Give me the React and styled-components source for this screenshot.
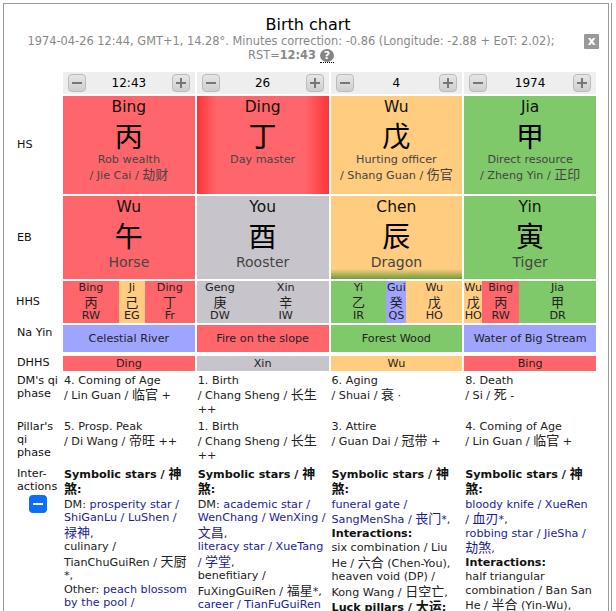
import React from "react";
import styled, { createGlobalStyle } from "styled-components";

const RED = "#ff666b";
const ORANGE = "#ffcc80";
const GREEN = "#80c96b";
const GRAY = "#c8c4cb";
const BLUE = "#9fa5ff";

const pillars = [
  {
    control: "12:43",
    hs: { pinyin: "Bing", hanzi: "丙", role: "Rob wealth", sub: "/ Jie Cai / 劫财", color: RED },
    eb: { pinyin: "Wu", hanzi: "午", animal: "Horse", color: RED },
    hhs: [
      { name: "Bing", hanzi: "丙", code: "RW", color: RED, width: 56 },
      { name: "Ji", hanzi: "己", code: "EG", color: ORANGE, width: 26 },
      { name: "Ding", hanzi: "丁", code: "Fr", color: RED, width: 50 },
    ],
    nayin: { text: "Celestial River", color: BLUE },
    dhhs: { text: "Ding", color: RED },
    dmPhase: ["4. Coming of Age", "/ Lin Guan / 临官 +"],
    pillarPhase: ["5. Prosp. Peak", "/ Di Wang / 帝旺 ++"],
  },
  {
    control: "26",
    hs: { pinyin: "Ding", hanzi: "丁", role: "Day master", color: RED, master: true },
    eb: { pinyin: "You", hanzi: "酉", animal: "Rooster", color: GRAY },
    hhs: [
      { name: "Geng", hanzi: "庚", code: "DW", color: GRAY, width: 46 },
      { name: "Xin", hanzi: "辛", code: "IW", color: GRAY, width: 85 },
    ],
    nayin: { text: "Fire on the slope", color: RED },
    dhhs: { text: "Xin", color: GRAY },
    dmPhase: ["1. Birth", "/ Chang Sheng / 长生 ++"],
    pillarPhase: ["1. Birth", "/ Chang Sheng / 长生 ++"],
  },
  {
    control: "4",
    hs: { pinyin: "Wu", hanzi: "戊", role: "Hurting officer", sub: "/ Shang Guan / 伤官", color: ORANGE },
    eb: { pinyin: "Chen", hanzi: "辰", animal: "Dragon", color: ORANGE, earthy: true },
    hhs: [
      { name: "Yi", hanzi: "乙", code: "IR", color: GREEN, width: 56 },
      { name: "Gui", hanzi: "癸", code: "QS", color: BLUE, width: 20 },
      { name: "Wu", hanzi: "戊", code: "HO", color: ORANGE, width: 56 },
    ],
    nayin: { text: "Forest Wood", color: GREEN },
    dhhs: { text: "Wu", color: ORANGE },
    dmPhase: ["6. Aging", "/ Shuai / 衰 ·"],
    pillarPhase: ["3. Attire", "/ Guan Dai / 冠带 +"],
  },
  {
    control: "1974",
    hs: { pinyin: "Jia", hanzi: "甲", role: "Direct resource", sub: "/ Zheng Yin / 正印", color: GREEN },
    eb: { pinyin: "Yin", hanzi: "寅", animal: "Tiger", color: GREEN },
    hhs: [
      { name: "Wu", hanzi: "戊", code: "HO", color: ORANGE, width: 18 },
      { name: "Bing", hanzi: "丙", code: "RW", color: RED, width: 37 },
      { name: "Jia", hanzi: "甲", code: "DR", color: GREEN, width: 77 },
    ],
    nayin: { text: "Water of Big Stream", color: BLUE },
    dhhs: { text: "Bing", color: RED },
    dmPhase: ["8. Death", "/ Si / 死 -"],
    pillarPhase: ["4. Coming of Age", "/ Lin Guan / 临官 +"],
  },
];

const GlobalStyle = createGlobalStyle`
  html, body {
    margin: 0;
    height: 611px;
    overflow: hidden;
    background: #fff;
    font-family: "DejaVu Sans", "Noto Sans CJK SC", sans-serif;
    font-size: 11.2px;
    color: #111;
  }
`;

const Page = styled.div`
  box-sizing: border-box;
  width: 612px;
  height: 608px;
  margin-top: 3px;
  padding-left: 3px;
  border-right: 1px solid #999;
`;

const Panel = styled.div`
  position: relative;
  box-sizing: border-box;
  width: 606px;
  height: 608px;
  overflow: hidden;
  border: 1px solid #999;
  border-bottom: 0;
  padding-top: 11px;
`;

const Title = styled.h1`
  margin: 0;
  padding-left: 4px;
  text-align: center;
  font-size: 16px;
  font-weight: 400;
  line-height: 20px;
  color: #000;
`;

const Subtitle = styled.div`
  width: 560px;
  margin-left: 7px;
  text-align: center;
  font-size: 11.4px;
  color: #888;
  line-height: 13.5px;
`;

const HelpMark = styled.span`
  display: inline-block;
  width: 14px;
  height: 13px;
  margin: -2px 0 0 4px;
  border-bottom: 1px dotted #000;
  vertical-align: 0;
`;

const HelpDot = styled.span`
  display: block;
  width: 14px;
  height: 13px;
  border-radius: 50%;
  background: #858585;
  color: #fff;
  font-size: 11px;
  font-weight: 700;
  line-height: 13px;
  text-align: center;
`;

const CloseButton = styled.span`
  position: absolute;
  top: 30px;
  right: 9px;
  width: 15px;
  height: 15px;
  border-radius: 1px;
  background: #999;
  color: #fff;
  font-size: 12px;
  font-weight: 700;
  line-height: 14px;
  text-align: center;
`;

const Chart = styled.div`
  display: grid;
  grid-template-columns: 57px repeat(4, 131.75px);
  grid-template-rows: 22px 98px 83px 42px 27px 17px 44px 44px auto;
  gap: 2px;
  margin-top: 9px;
`;

const RowLabel = styled.div`
  padding: ${(p) => p.$top ?? 0}px 0 0 ${(p) => p.$indent ?? 13}px;
  line-height: 13px;
  align-self: ${(p) => (p.$top !== undefined ? "start" : "center")};
  color: #111;
`;

const Stepper = styled.div`
  display: flex;
  align-items: center;
  justify-content: space-between;
  padding: 0 5px;
  background: #eee;
  font-size: 12px;
  color: #000;
`;

const StepButton = styled.span`
  display: flex;
  box-sizing: border-box;
  width: 18px;
  height: 18px;
  border: 1px solid #bbb;
  border-radius: 4px;
  background: linear-gradient(#e6e6e6, #cfcfcf);
  color: #777;
`;

const Pillar = styled.div`
  display: flex;
  flex-direction: column;
  align-items: center;
  padding-top: 1px;
  background: ${(p) => p.$color};
`;

const StemCell = styled(Pillar)`
  ${(p) =>
    p.$master &&
    `background: linear-gradient(to right, #ff3338, ${RED} 15%, ${RED} 82%, #ff3338);`}
`;

const BranchCell = styled(Pillar)`
  ${(p) =>
    p.$earthy &&
    `background: linear-gradient(to bottom, ${ORANGE} 88%, #6f9c3a);`}
`;

const Pinyin = styled.div`
  font-size: 15.5px;
  line-height: 20px;
  color: #111;
`;

const Hanzi = styled.div`
  font-family: "Noto Sans CJK SC", sans-serif;
  font-size: 28px;
  line-height: 32px;
  color: #000;
  margin: ${(p) => (p.$branch ? "2px 0 1px" : "2px 0")};
`;

const Role = styled.div`
  line-height: 14.5px;
  color: #444;
  white-space: nowrap;
`;

const Animal = styled.div`
  font-size: 14px;
  line-height: 18px;
  color: #444;
  margin-top: 1px;
`;

const HiddenRow = styled.div`
  display: flex;
`;

const HiddenStem = styled.div`
  flex: ${(p) => p.$width} 0 0;
  min-width: 0;
  display: flex;
  flex-direction: column;
  align-items: center;
  background: ${(p) => p.$color};
  line-height: 14.3px;
  color: #222;
  white-space: nowrap;
`;

const HiddenGlyph = styled.span`
  font-family: "Noto Sans CJK SC", sans-serif;
  font-size: 13px;
`;

const Band = styled.div`
  display: flex;
  align-items: center;
  justify-content: center;
  margin-top: ${(p) => p.$offset ?? 0}px;
  background: ${(p) => p.$color};
  color: #222;
`;

const Note = styled.div`
  line-height: 13.5px;
  color: #222;
  padding: 1px 0 0 1px;
`;

const Heading = styled.b`
  display: block;
  margin-bottom: 1px;
  color: #111;
`;

const Link = styled.a`
  color: #1c1c96;
`;

const Han = styled.span`
  font-family: "Noto Sans CJK SC", sans-serif;
  font-size: 13px;
  line-height: 14.4px;
`;

const ToggleWrap = styled.div`
  display: flex;
  justify-content: center;
  margin: 2px 2px 0 0;
`;

const Toggle = styled.span`
  display: flex;
  align-items: center;
  justify-content: center;
  width: 18px;
  height: 18px;
  border-radius: 4px;
  background: #0d6efd;
`;

const ToggleBar = styled.span`
  width: 10px;
  height: 2px;
  background: #fff;
`;

const MinusIcon = () => (
  <svg width="16" height="16" viewBox="0 0 16 16">
    <rect x="3" y="7" width="10" height="2" fill="currentColor" />
  </svg>
);

const PlusIcon = () => (
  <svg width="16" height="16" viewBox="0 0 16 16">
    <rect x="3" y="7" width="10" height="2" fill="currentColor" />
    <rect x="7" y="3" width="2" height="10" fill="currentColor" />
  </svg>
);

// chinese runs are set a bit larger than the latin text around them
const T = ({ children }) =>
  children
    .split(/([\u4e00-\u9fff]+)/)
    .map((part, i) => (i % 2 ? <Han key={i}>{part}</Han> : part));

export default function App() {
  return (
    <Page>
      <GlobalStyle />
      <Panel>
        <Title>Birth chart</Title>
        <Subtitle>
          1974-04-26 12:44, GMT+1, 14.28°. Minutes correction: -0.86 (Longitude: -2.88 + EoT: 2.02);
          RST=<b>12:43</b>
          <HelpMark>
            <HelpDot>?</HelpDot>
          </HelpMark>
        </Subtitle>
        <CloseButton>x</CloseButton>

        <Chart>
          <span />
          {pillars.map((p) => (
            <Stepper key={p.control}>
              <StepButton><MinusIcon /></StepButton>
              {p.control}
              <StepButton><PlusIcon /></StepButton>
            </Stepper>
          ))}

          <RowLabel>HS</RowLabel>
          {pillars.map(({ hs }) => (
            <StemCell key={hs.pinyin} $color={hs.color} $master={hs.master}>
              <Pinyin>{hs.pinyin}</Pinyin>
              <Hanzi>{hs.hanzi}</Hanzi>
              <Role>{hs.role}</Role>
              {hs.sub && <Role><T>{hs.sub}</T></Role>}
            </StemCell>
          ))}

          <RowLabel>EB</RowLabel>
          {pillars.map(({ eb }) => (
            <BranchCell key={eb.pinyin} $color={eb.color} $earthy={eb.earthy}>
              <Pinyin>{eb.pinyin}</Pinyin>
              <Hanzi $branch>{eb.hanzi}</Hanzi>
              <Animal>{eb.animal}</Animal>
            </BranchCell>
          ))}

          <RowLabel $indent={12}>HHS</RowLabel>
          {pillars.map((p) => (
            <HiddenRow key={p.control}>
              {p.hhs.map((h) => (
                <HiddenStem key={h.code} $color={h.color} $width={h.width}>
                  <span>{h.name}</span>
                  <HiddenGlyph>{h.hanzi}</HiddenGlyph>
                  <span>{h.code}</span>
                </HiddenStem>
              ))}
            </HiddenRow>
          ))}

          <RowLabel $top={1.5}>Na Yin</RowLabel>
          {pillars.map(({ nayin }) => (
            <Band key={nayin.text} $color={nayin.color}>{nayin.text}</Band>
          ))}

          <RowLabel>DHHS</RowLabel>
          {pillars.map(({ dhhs }) => (
            <Band key={dhhs.text} $color={dhhs.color} $offset={2}>{dhhs.text}</Band>
          ))}

          <RowLabel $top={1.5}>DM's qi phase</RowLabel>
          {pillars.map((p) => (
            <Note key={p.control}>
              {p.dmPhase[0]}
              <br />
              <T>{p.dmPhase[1]}</T>
            </Note>
          ))}

          <RowLabel $top={1.5}>Pillar's qi phase</RowLabel>
          {pillars.map((p) => (
            <Note key={p.control}>
              {p.pillarPhase[0]}
              <br />
              <T>{p.pillarPhase[1]}</T>
            </Note>
          ))}

          <RowLabel $top={2}>
            Inter-
            <br />
            actions
            <ToggleWrap>
              <Toggle><ToggleBar /></Toggle>
            </ToggleWrap>
          </RowLabel>
          <Note>
            <Heading><T>Symbolic stars / 神煞:</T></Heading>
            DM: <Link>prosperity star / ShiGanLu / LuShen /</Link>
            <br />
            <Link><T>禄神</T></Link>,
            <br />
            <T>culinary / TianChuGuiRen / 天厨*,</T>
            <br />
            Other: <Link>peach blossom by the pool /</Link>
            <br />
            <Link><T>XianChi / 咸池</T></Link>
          </Note>
          <Note>
            <Heading><T>Symbolic stars / 神煞:</T></Heading>
            DM: <Link><T>academic star / WenChang / WenXing / 文昌</T></Link>,
            <br />
            <Link><T>literacy star / XueTang / 学堂</T></Link>,
            <br />
            <T>benefitiary / FuXingGuiRen / 福星*,</T>
            <br />
            <Link>career / TianFuGuiRen</Link>
          </Note>
          <Note>
            <Heading><T>Symbolic stars / 神煞:</T></Heading>
            <Link><T>funeral gate / SangMenSha / 丧门*</T></Link>,
            <Heading>Interactions:</Heading>
            <T>six combination / Liu He / 六合 (Chen-You),</T>
            <br />
            <T>heaven void (DP) / Kong Wang / 日空亡,</T>
            <Heading><T>Luck pillars / 大运:</T></Heading>
          </Note>
          <Note>
            <Heading><T>Symbolic stars / 神煞:</T></Heading>
            <Link>bloody knife / XueRen</Link>
            <br />
            <Link><T>/ 血刃*</T></Link>,
            <br />
            <Link><T>robbing star / JieSha / 劫煞</T></Link>,
            <Heading>Interactions:</Heading>
            <T>half triangular combination / Ban San He / 半合 (Yin-Wu),</T>
          </Note>
        </Chart>
      </Panel>
    </Page>
  );
}
